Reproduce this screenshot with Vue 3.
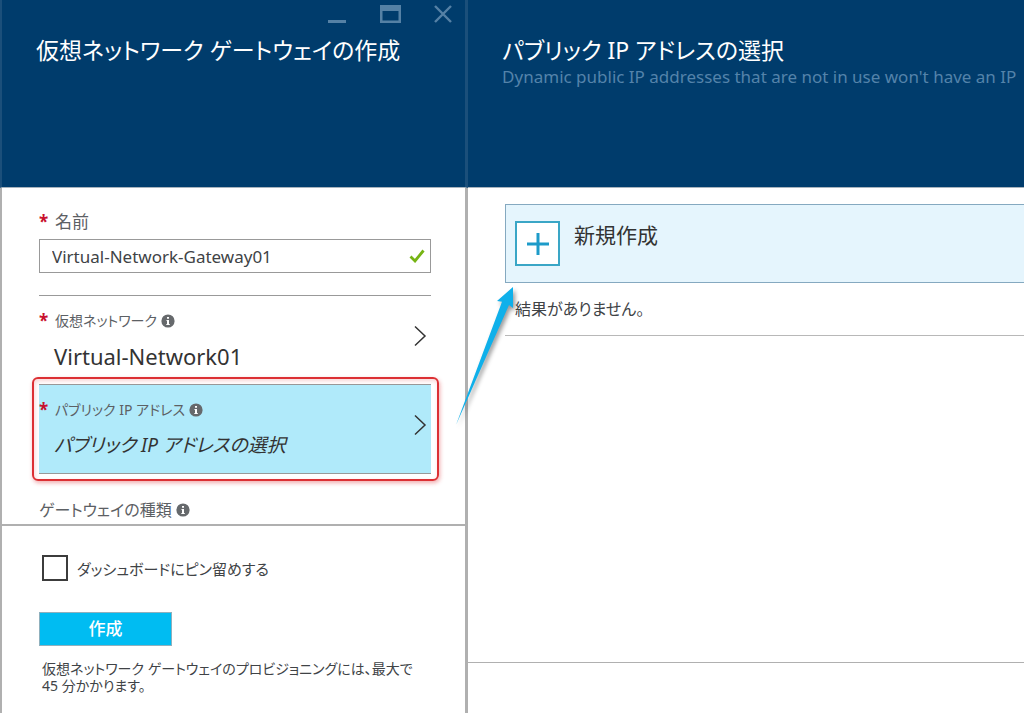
<script setup>
import { ref } from 'vue'

const name = ref('Virtual-Network-Gateway01')
const pinned = ref(false)
const pickers = [
  { label: '仮想ネットワーク', value: 'Virtual-Network01', active: false },
  { label: 'パブリック IP アドレス', value: 'パブリック IP アドレスの選択', active: true },
]
</script>

<template>
  <main class="portal">
    <section class="blade create">
      <header class="head">
        <div class="controls">
          <button type="button" aria-label="最小化">
            <svg width="22" height="22" viewBox="0 0 22 22"><path d="M2 20.500h18" stroke="currentColor" stroke-width="3" /></svg>
          </button>
          <button type="button" aria-label="最大化">
            <svg width="22" height="22" viewBox="0 0 22 22"><path fill="currentColor" fill-rule="evenodd" d="M1 4h21v18H1zM3.500 10v9.500h16V10z" /></svg>
          </button>
          <button type="button" aria-label="閉じる">
            <svg width="22" height="22" viewBox="0 0 22 22"><path d="M3 5l16 16M19 5L3 21" stroke="currentColor" stroke-width="2.400" /></svg>
          </button>
        </div>
        <h1>仮想ネットワーク ゲートウェイの作成</h1>
      </header>

      <div class="body">
        <label class="label" for="gw-name"><span class="star">*</span>名前</label>
        <div class="field">
          <input id="gw-name" v-model="name" type="text" />
          <svg class="ok" width="16" height="14" viewBox="0 0 16 14"><path d="M1.500 7.500l4.500 4.500L14.500 1.500" fill="none" stroke="#76b414" stroke-width="2.800" /></svg>
        </div>
        <div class="pickers">
          <button v-for="p in pickers" :key="p.label" type="button" class="picker" :class="{ active: p.active }">
            <span class="text">
              <span class="label small"><span class="star">*</span>{{ p.label }}
                <svg class="info" width="14" height="14" viewBox="0 0 14 14"><circle cx="7" cy="7" r="6.600" fill="#66696c" /><path d="M6 3h2v1.800H6zM5.500 6H8v4h.8v1H5.300v-1H6V7h-.5z" fill="#fff" /></svg>
              </span>
              <span class="value">{{ p.value }}</span>
            </span>
            <svg class="chevron" width="14" height="22" viewBox="0 0 14 22"><path d="M2 1.500l10 9.500L2 20.500" fill="none" stroke="#333" stroke-width="1.500" /></svg>
          </button>
        </div>
        <p class="label kind">ゲートウェイの種類
          <svg class="info" width="14" height="14" viewBox="0 0 14 14"><circle cx="7" cy="7" r="6.600" fill="#66696c" /><path d="M6 3h2v1.800H6zM5.500 6H8v4h.8v1H5.300v-1H6V7h-.5z" fill="#fff" /></svg>
        </p>
      </div>

      <footer class="foot">
        <label class="pin"><input v-model="pinned" type="checkbox" />ダッシュボードにピン留めする</label>
        <button type="button" class="submit">作成</button>
        <p class="note">仮想ネットワーク ゲートウェイのプロビジョニングには、最大で 45 分かかります。</p>
      </footer>
    </section>

    <section class="blade choose">
      <header class="head">
        <h1>パブリック IP アドレスの選択</h1>
        <p class="sub">Dynamic public IP addresses that are not in use won't have an IP</p>
      </header>
      <div class="body">
        <button type="button" class="new">
          <span class="plus"><svg width="22" height="22" viewBox="0 0 22 22"><path d="M11 0v22M0 11h22" stroke="#1d9bc9" stroke-width="3" /></svg></span>
          新規作成
        </button>
        <p class="empty">結果がありません。</p>
      </div>
      <footer class="foot"></footer>
      <svg class="arrow" width="80" height="160" viewBox="0 0 80 160">
        <path d="M65 7L49 21l5 .7L8 145 61 25l4 3z" fill="#0fb0ea" />
      </svg>
    </section>
  </main>
</template>

<style>
body {
  margin: 0;
}
</style>

<style scoped>
.portal {
  display: grid;
  grid-template-columns: 16fr 19fr;
  height: 100vh;
  overflow: hidden;
  background: #fff;
  color: #404346;
  font-family: "Noto Sans", "Noto Sans CJK JP", sans-serif;
  font-feature-settings: "palt";
  font-size: 16px;
}
h1,
p {
  margin: 0;
  font-weight: 400;
}
button,
input {
  font: inherit;
  font-feature-settings: inherit;
  color: inherit;
  padding: 0;
  margin: 0;
  border: 0;
  background: none;
}
svg {
  display: block;
}
.blade {
  display: flex;
  flex-direction: column;
  min-width: 0;
  min-height: 0;
  position: relative;
}
.head {
  box-sizing: border-box;
  flex: none;
  height: 188px;
  padding: 34px 0 0 34px;
  background: #003c6c;
  border-bottom: 1px solid #a7b3bd;
  color: #fff;
}
.create .head {
  border-left: 2px solid #1b4f7a;
  border-right: 3px solid #1b4f7a;
  border-bottom-color: #a7b3bd;
}
.controls {
  position: absolute;
  top: 1px;
  right: 14px;
  display: flex;
  gap: 31px;
  color: #5581a5;
}
h1 {
  font-size: 23px;
  line-height: 32px;
  white-space: nowrap;
}
.sub {
  font-size: 17px;
  line-height: 22px;
  color: #5483aa;
  white-space: nowrap;
  overflow: hidden;
}
.body {
  flex: 1;
  min-height: 0;
}
.create .body {
  padding: 22px 34px 0 37px;
  border-left: 2px solid #b0b0b0;
  border-right: 3px solid #b0b0b0;
  overflow: hidden;
}
.label {
  display: flex;
  align-items: center;
  font-size: 17px;
  line-height: 24px;
  color: #5c6064;
}
.small {
  font-size: 14px;
}
.star {
  width: 16px;
  color: #c8102e;
  font-weight: 700;
  font-size: 17px;
}
.field {
  display: flex;
  align-items: center;
  box-sizing: border-box;
  height: 34px;
  margin: 5px 0 22px;
  padding: 0 5px 0 12px;
  border: 1px solid #999;
}
.field input {
  flex: 1;
  min-width: 0;
  font-size: 17px;
  outline: none;
}
.picker {
  display: flex;
  align-items: center;
  width: 100%;
  box-sizing: border-box;
  height: 89px;
  padding-right: 4px;
  border-top: 1px solid #999;
  text-align: left;
}
.text {
  flex: 1;
}
.value {
  display: block;
  padding: 8px 0 0 15px;
  font-size: 22px;
  line-height: 30px;
  color: #333;
}
.active {
  position: relative;
  height: 90px;
  background: #b0eafa;
  border-bottom: 1px solid #999;
}
.active::after {
  content: "";
  position: absolute;
  inset: -8px -8px -8px -7px;
  border: 2px solid #dc3034;
  border-radius: 6px;
  box-shadow: 1px 2px 4px #dc303466, inset 1px 2px 4px #dc303433;
}
.active .value {
  font-size: 19px;
  font-style: italic;
}
.info {
  margin-left: 4px;
}
.chevron {
  margin-bottom: 8px;
}
.kind {
  padding-top: 24px;
  font-size: 16px;
}
.create .foot {
  flex: none;
  padding: 29px 40px 19px 37px;
  border: solid #b0b0b0;
  border-width: 2px 3px 0 2px;
}
.pin {
  display: flex;
  align-items: center;
  gap: 9px;
  padding-left: 3px;
  font-size: 15px;
}
.pin input {
  appearance: none;
  width: 26px;
  height: 26px;
  border: 2px solid #3c3c3c;
}
.submit {
  display: block;
  width: 133px;
  height: 34px;
  margin: 31px 0 14px;
  padding-bottom: 4px;
  border: 1px solid #8fb0bd;
  background: #00bcf2;
  color: #fff;
  font-size: 17px;
  font-weight: 500;
}
.note {
  padding-left: 3px;
  font-size: 14px;
  line-height: 17px;
}
.choose .body {
  padding: 16px 0 0 37px;
}
.new {
  display: flex;
  align-items: flex-start;
  gap: 14px;
  width: 100%;
  height: 79px;
  padding: 16px 9px;
  border: solid #85a9c0;
  border-width: 1px 0 1px 1px;
  background: #e5f5fd;
  font-size: 21px;
  line-height: 28px;
  color: #333;
}
.plus {
  display: grid;
  place-items: center;
  box-sizing: border-box;
  width: 45px;
  height: 45px;
  border: 2px solid #3aa6c6;
  background: #fff;
}
.empty {
  padding: 14px 10px;
  line-height: 24px;
  border-bottom: 1px solid #b8b8b8;
}
.choose .foot {
  flex: none;
  height: 50px;
  border-top: 1px solid #b0b0b0;
}
.arrow {
  position: absolute;
  top: 280px;
  left: -20px;
  filter: drop-shadow(2px 3px 2px #0006);
}
</style>
